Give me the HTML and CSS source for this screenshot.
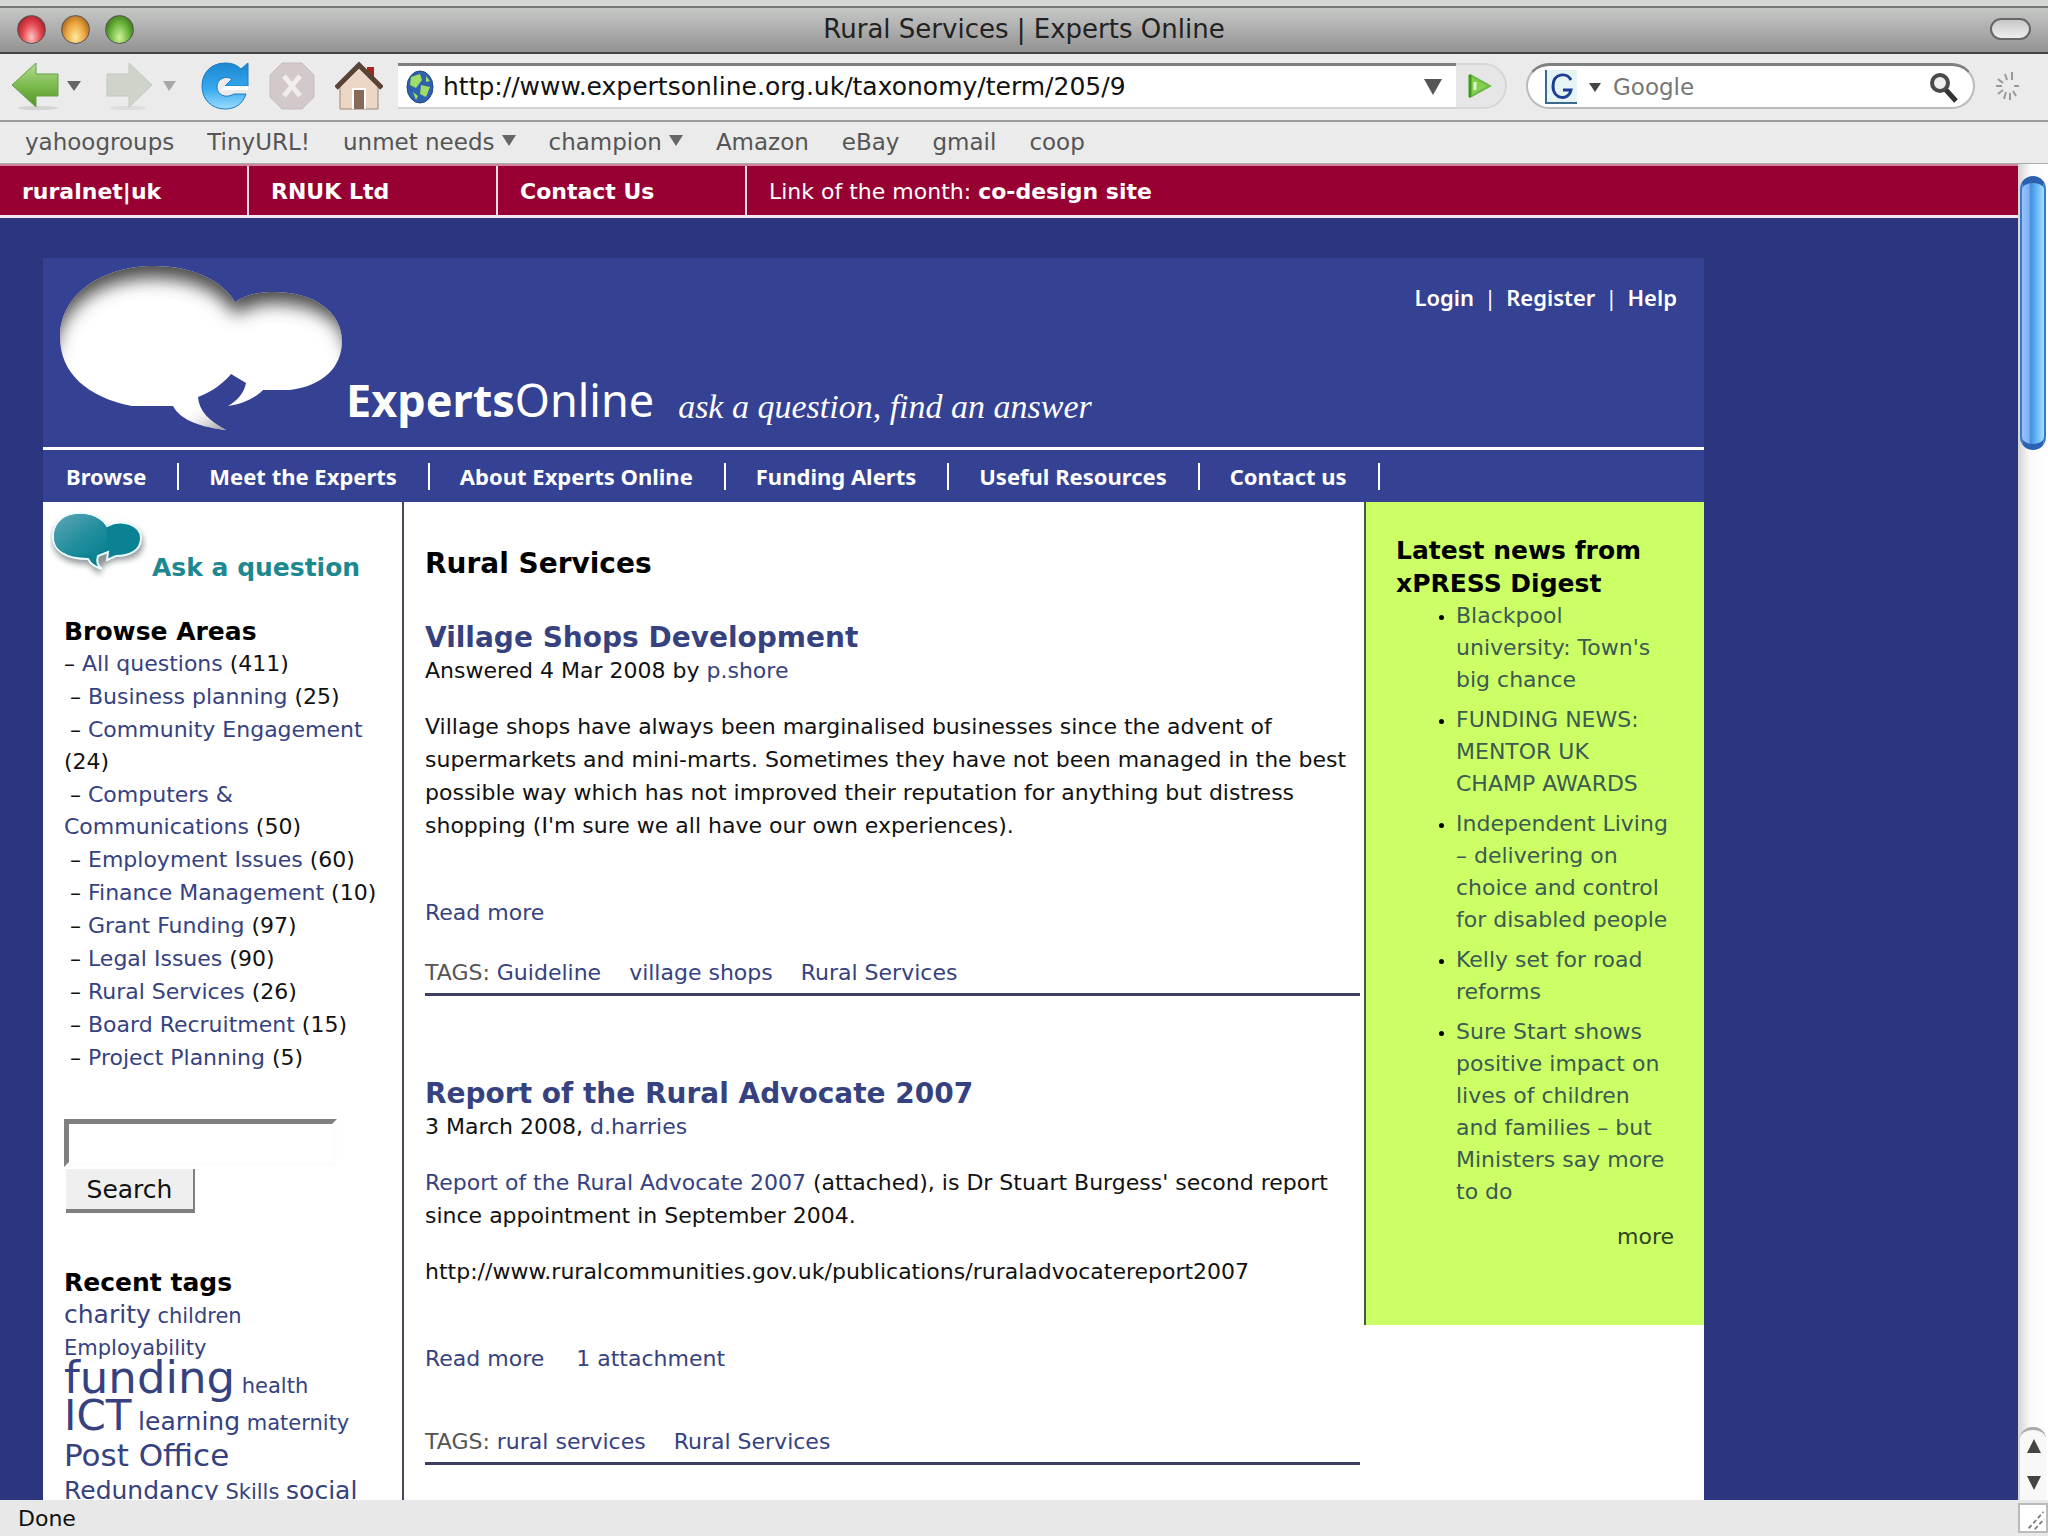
FILE: index.html
```html
<!DOCTYPE html>
<html lang="en">
<head>
<meta charset="UTF-8">
<meta name="viewport" content="width=device-width, initial-scale=1.0">
<title>Rural Services | Experts Online</title>
<link rel="stylesheet" href="styles.css">
</head>
<body>

<div class="titlebar">
    <div class="lights">
        <button class="light red" aria-label="Close"></button>
        <button class="light amber" aria-label="Minimise"></button>
        <button class="light green" aria-label="Zoom"></button>
    </div>
    <span class="window-title">Rural Services | Experts Online</span>
    <button class="pill" aria-label="Toggle toolbar"></button>
</div>

<div class="toolbar">
    <button class="back" aria-label="Back">
        <svg width="72" height="50" viewBox="0 0 72 50">
            <defs>
                <linearGradient id="leaf" x1="0" y1="0" x2="0" y2="1"><stop offset="0" stop-color="#b4dc94"/><stop offset=".5" stop-color="#7dbc4e"/><stop offset="1" stop-color="#4f9226"/></linearGradient>
            </defs>
            <ellipse cx="27" cy="47" rx="20" ry="2" fill="#d2d4d0"/>
            <path d="M1 24 L25 2 V13 H47 V35 H25 V46 Z" fill="url(#leaf)" stroke="#6a9f4a"/>
            <path d="M56 20 H70 L63 30 Z" fill="#666"/>
        </svg>
    </button>
    <button class="forward" aria-label="Forward">
        <svg width="72" height="50" viewBox="0 0 72 50">
            <ellipse cx="22" cy="47" rx="18" ry="2" fill="#dcdddb"/>
            <path d="M46 24 L23 2 V13 H1 V35 H23 V46 Z" fill="#cfd4cb" stroke="#c3c8bf"/>
            <path d="M57 20 H70 L63 30 Z" fill="#a8a8a8"/>
        </svg>
    </button>
    <button class="reload" aria-label="Reload">
        <svg width="48" height="50" viewBox="0 0 48 50">
            <defs>
                <linearGradient id="sky" x1="0" y1="0" x2="0" y2="1"><stop offset="0" stop-color="#1d86cf"/><stop offset=".55" stop-color="#35a8ee"/><stop offset="1" stop-color="#9bdcff"/></linearGradient>
            </defs>
            <path d="M47 2 V25 H24 L31 18 C24 14 16 18 16 26 C16 34 25 38 33 33 H45 C42 43 34 48 24 48 C10 48 1 38 1 25 C1 12 10 2 24 2 C31 2 36 4 40 8 Z" fill="url(#sky)" stroke="#1a7cc4"/>
            <path d="M24 25 H47 V29 H20 Z" fill="#fff"/>
        </svg>
    </button>
    <button class="stop" aria-label="Stop">
        <svg width="46" height="50" viewBox="0 0 46 50">
            <path d="M13 2 H33 L45 14 V36 L33 48 H13 L1 36 V14 Z" fill="#d3c9cb" stroke="#c6bcbe"/>
            <path d="M15 15 L31 35 M31 15 L15 35" stroke="#f1eded" stroke-width="5"/>
        </svg>
    </button>
    <button class="home" aria-label="Home">
        <svg width="48" height="50" viewBox="0 0 48 50">
            <rect x="32" y="6" width="7" height="14" fill="#a3281e"/>
            <path d="M5 25 L24 7 L43 25 V48 H5 Z" fill="#ecd7c7" stroke="#a18472"/>
            <path d="M1 27 L24 4 L47 27" fill="none" stroke="#5a4237" stroke-width="5"/>
            <path d="M18 48 V28 H30 V48" fill="#876958" stroke="#fff" stroke-width="2"/>
        </svg>
    </button>

    <div class="address">
        <svg width="28" height="34" viewBox="0 0 28 34">
            <ellipse cx="14" cy="17" rx="13" ry="16" fill="#2e62ad" stroke="#1f4684"/>
            <path d="M5 7 L14 4 L16 10 L10 18 L4 15 Z M15 15 L24 17 L20 27 L14 24 Z M7 22 L12 26 L10 30 Z M20 6 L24 11 L20 12 Z" fill="#9fdc6a"/>
        </svg>
        <input type="text" aria-label="Address" value="http://www.expertsonline.org.uk/taxonomy/term/205/9">
        <svg width="18" height="18" viewBox="0 0 18 18"><path d="M0 1 H18 L9 17 Z" fill="#555"/></svg>
    </div>
    <button class="go" aria-label="Go">
        <svg width="24" height="24" viewBox="0 0 24 24"><path d="M2 1 L22 12 L2 23 Z" fill="#86cf4e" stroke="#6dba45" stroke-width="2"/><path d="M2 1 V23" stroke="#3c9a1c" stroke-width="3"/><path d="M7 8 V16" stroke="#dff5cd" stroke-width="3"/></svg>
    </button>

    <div class="google">
        <svg width="32" height="34" viewBox="0 0 32 34">
            <rect width="32" height="34" fill="#e6f4f6"/>
            <path d="M1 0 V33 H32" fill="none" stroke="#3b6a8e" stroke-width="2"/>
            <path d="M26 10 C22 2 8 3 8 16 C8 30 24 31 26 20 H18" fill="none" stroke="#1c3f94" stroke-width="3"/>
        </svg>
        <svg width="12" height="10" viewBox="0 0 12 10"><path d="M0 1 H12 L6 10 Z" fill="#444"/></svg>
        <input type="text" aria-label="Web search" placeholder="Google">
        <svg width="30" height="32" viewBox="0 0 30 32">
            <circle cx="11" cy="12" r="8" fill="#eee" stroke="#4a4a4a" stroke-width="4"/>
            <path d="M17 19 L27 30" stroke="#333" stroke-width="5"/>
        </svg>
    </div>
    <svg width="26" height="32" viewBox="0 0 26 32">
        <path d="M17 2 V10 M10 4 L12 10 M3 9 L8 13 M1 16 H7 M3 24 L8 20 M9 29 L11 22 M15 30 V23 M21 26 L18 21 M24 16 H19" stroke="#999" stroke-width="2"/>
    </svg>
</div>

<div class="bookmarks">
    <a href="#">yahoogroups</a>
    <a href="#">TinyURL!</a>
    <a href="#" class="folder">unmet needs</a>
    <a href="#" class="folder">champion</a>
    <a href="#">Amazon</a>
    <a href="#">eBay</a>
    <a href="#">gmail</a>
    <a href="#">coop</a>
</div>

<div class="view">
    <div class="page">
        <div class="topbar">
            <a href="#">ruralnet|uk</a>
            <a href="#">RNUK Ltd</a>
            <a href="#">Contact Us</a>
            <span>Link of the month: <a href="#">co-design site</a></span>
        </div>

        <div class="site">
            <div class="header">
                <svg width="284" height="168" viewBox="0 0 284 168">
                    <defs>
                        <clipPath id="bubbles">
                            <path d="M95 1 C135 1 165 17 176 37 C188 29 201 27 215 27 C255 27 283 47 283 76 C283 102 264 121 231 125 H204 C196 133 184 139 169 141 C179 135 185 128 187 118 L172 109 C164 119 152 127 139 132 C140 146 150 156 167 165 C143 162 122 156 114 141 H73 C28 132 1 108 1 72 C1 30 42 1 95 1 Z"/>
                        </clipPath>
                        <filter id="blur" x="-20%" y="-20%" width="140%" height="140%"><feGaussianBlur stdDeviation="9"/></filter>
                        <linearGradient id="tail" x1="0" y1="0" x2="1" y2="1"><stop offset=".3" stop-color="#fff" stop-opacity="0"/><stop offset="1" stop-color="#777"/></linearGradient>
                    </defs>
                    <g clip-path="url(#bubbles)">
                        <rect width="284" height="168" fill="#fff"/>
                        <path d="M-40 -40 H324 V90 H288 C292 60 260 38 215 38 C201 38 188 42 176 50 C165 28 135 13 95 13 C42 13 -1 40 -5 90 H-40 Z" fill="#4a4a4a" filter="url(#blur)"/>
                        <path d="M112 141 L139 132 L170 168 H112 Z" fill="url(#tail)"/>
                    </g>
                </svg>
                <div class="brand"><b>Experts</b>Online</div>
                <div class="tagline">ask a question, find an answer</div>
                <div class="account"><a href="#">Login</a><span>|</span><a href="#">Register</a><span>|</span><a href="#">Help</a></div>
            </div>

            <div class="nav">
                <a href="#">Browse</a>
                <a href="#">Meet the Experts</a>
                <a href="#">About Experts Online</a>
                <a href="#">Funding Alerts</a>
                <a href="#">Useful Resources</a>
                <a href="#">Contact us</a>
            </div>

            <div class="columns">
                <div class="sidebar">
                    <a href="#" class="ask">
                        <svg width="98" height="68" viewBox="0 0 98 68">
                            <defs>
                                <linearGradient id="teal" x1="0" y1="0" x2="1" y2="1"><stop offset="0" stop-color="#5fa6b4"/><stop offset=".6" stop-color="#1f8d9d"/><stop offset="1" stop-color="#08808f"/></linearGradient>
                                <filter id="soft" x="-20%" y="-20%" width="140%" height="150%"><feGaussianBlur stdDeviation="3"/></filter>
                            </defs>
                            <path d="M30 8 C42 8 53 13 56 20 C70 11 93 17 93 33 C93 48 78 50 65 50 L52 56 L50 65 L38 54 C15 54 3 44 3 31 C3 17 14 8 30 8 Z" fill="#8e9496" filter="url(#soft)"/>
                            <path d="M30 3 C43 3 53 9 57 16 C72 8 91 15 91 28 C91 41 79 46 66 46 L57 50 L58 42 L48 46 C46 52 48 56 52 59 C44 57 40 53 38 49 C15 49 3 40 3 27 C3 13 14 3 30 3 Z" fill="#0b8294" stroke="#e9fbfc" stroke-width="2"/>
                            <path d="M30 4 C46 4 57 13 57 26 C57 36 53 41 47 45 H39 C15 48 4 40 4 27 C4 13 14 4 30 4 Z" fill="url(#teal)"/>
                        </svg>
                        <span>Ask a question</span>
                    </a>

                    <h3>Browse Areas</h3>
                    <ul class="areas">
                        <li class="all">– <a href="#">All questions</a> (411)</li>
                        <li>– <a href="#">Business planning</a> (25)</li>
                        <li>– <a href="#">Community Engagement</a> (24)</li>
                        <li>– <a href="#">Computers &amp; Communications</a> (50)</li>
                        <li>– <a href="#">Employment Issues</a> (60)</li>
                        <li>– <a href="#">Finance Management</a> (10)</li>
                        <li>– <a href="#">Grant Funding</a> (97)</li>
                        <li>– <a href="#">Legal Issues</a> (90)</li>
                        <li>– <a href="#">Rural Services</a> (26)</li>
                        <li>– <a href="#">Board Recruitment</a> (15)</li>
                        <li>– <a href="#">Project Planning</a> (5)</li>
                    </ul>

                    <form class="search">
                        <input type="text" aria-label="Search this site">
                        <button type="submit">Search</button>
                    </form>

                    <h3>Recent tags</h3>
                    <div class="cloud">
                        <a href="#" class="t2">charity</a> <a href="#">children</a><br>
                        <a href="#">Employability</a><br>
                        <a href="#" class="t5">funding</a> <a href="#">health</a><br>
                        <a href="#" class="t4">ICT</a> <a href="#" class="t2">learning</a> <a href="#">maternity</a><br>
                        <a href="#" class="t3">Post Office</a><br>
                        <a href="#" class="t2">Redundancy</a> <a href="#">Skills</a> <a href="#" class="t2">social</a>
                    </div>
                </div>

                <div class="main">
                    <h1>Rural Services</h1>

                    <div class="article">
                        <h2><a href="#">Village Shops Development</a></h2>
                        <div>Answered 4 Mar 2008 by <a href="#">p.shore</a></div>
                        <p>Village shops have always been marginalised businesses since the advent of supermarkets and mini-marts. Sometimes they have not been managed in the best possible way which has not improved their reputation for anything but distress shopping (I'm sure we all have our own experiences).</p>
                        <div class="links"><a href="#">Read more</a></div>
                        <div class="tags">TAGS: <a href="#">Guideline</a> <a href="#">village shops</a> <a href="#">Rural Services</a></div>
                    </div>

                    <div class="article">
                        <h2><a href="#">Report of the Rural Advocate 2007</a></h2>
                        <div>3 March 2008, <a href="#">d.harries</a></div>
                        <p><a href="#">Report of the Rural Advocate 2007</a> (attached), is Dr Stuart Burgess' second report since appointment in September 2004.</p>
                        <p>http://www.ruralcommunities.gov.uk/publications/ruraladvocatereport2007</p>
                        <div class="links"><a href="#">Read more</a> <a href="#">1 attachment</a></div>
                        <div class="tags late">TAGS: <a href="#">rural services</a> <a href="#">Rural Services</a></div>
                    </div>
                </div>

                <div class="news">
                    <h3>Latest news from xPRESS Digest</h3>
                    <ul>
                        <li><a href="#">Blackpool university: Town's big chance</a></li>
                        <li><a href="#">FUNDING NEWS: MENTOR UK CHAMP AWARDS</a></li>
                        <li><a href="#">Independent Living – delivering on choice and control for disabled people</a></li>
                        <li><a href="#">Kelly set for road reforms</a></li>
                        <li><a href="#">Sure Start shows positive impact on lives of children and families – but Ministers say more to do</a></li>
                    </ul>
                    <a href="#" class="more">more</a>
                </div>
            </div>
        </div>
    </div>

    <div class="scrollbar">
        <div class="thumb"></div>
        <div class="arrows">
            <svg width="28" height="70" viewBox="0 0 28 70">
                <path d="M7 23 L14 9 L21 23 Z M7 46 H21 L14 60 Z" fill="#444"/>
            </svg>
        </div>
    </div>
</div>

<div class="status">
    <span>Done</span>
    <svg width="28" height="30" viewBox="0 0 28 30">
        <path d="M9 27 L26 8 M16 28 L27 16" stroke="#777" stroke-width="2" stroke-dasharray="5 3"/>
    </svg>
</div>

</body>
</html>
```
FILE: styles.css
```css
* {
    box-sizing: border-box;
}
body {
    margin: 0;
    height: 100vh;
    display: flex;
    flex-direction: column;
    overflow: hidden;
    font-family: "DejaVu Sans", "Noto Sans", sans-serif;
    font-size: 22px;
    line-height: 33px;
    color: #111;
    background: #ebebeb;
}
a {
    color: #36427f;
    text-decoration: none;
}
button {
    padding: 0;
    border: none;
    background: none;
    font-family: inherit;
}
svg {
    display: block;
    flex: none;
}
h1, h2, h3, p, ul {
    margin: 0;
    padding: 0;
}

/* Browser window */
.titlebar {
    display: grid;
    grid-template-columns: 1fr auto 1fr;
    align-items: center;
    height: 54px;
    padding: 0 17px;
    border-top: 6px solid #d4d7d3;
    border-bottom: 2px solid #444;
    background: linear-gradient(#777 0, #777 2px, #c6c8c6 2px, #929292);
}
.lights {
    display: flex;
    gap: 15px;
}
.light {
    width: 29px;
    height: 29px;
    border-radius: 50%;
    border: 1px solid #555;
}
.red {
    background: radial-gradient(ellipse at 50% 80%, #ffc4c0, #e2424a 50%, #7d1018);
}
.amber {
    background: radial-gradient(ellipse at 50% 80%, #ffeb9c, #eba23c 50%, #7c4410);
}
.green {
    background: radial-gradient(ellipse at 50% 80%, #d2f29c, #68b43a 50%, #24500f);
}
.window-title {
    font-size: 26px;
    color: #222;
}
.pill {
    justify-self: end;
    width: 41px;
    height: 22px;
    border: 2px solid #666;
    border-radius: 11px;
    background: linear-gradient(#c8c8c8, #eee);
}
.toolbar {
    display: flex;
    align-items: center;
    height: 68px;
    padding: 0 27px 2px 11px;
    border-bottom: 2px solid #9b9b9b;
}
.back, .forward {
    margin-right: 23px;
}
.reload, .stop {
    margin-right: 20px;
}
.home {
    margin-right: 15px;
}
.address {
    flex: 1;
    display: flex;
    align-items: center;
    gap: 9px;
    height: 46px;
    padding: 0 14px 0 8px;
    border-top: 3px solid #808080;
    border-bottom: 2px solid #d2d2d2;
    background: #fff;
}
.address input, .google input {
    flex: 1;
    min-width: 0;
    padding: 0;
    border: none;
    outline: none;
    background: none;
    font-family: inherit;
    font-size: 25px;
    color: #111;
}
.go {
    display: flex;
    align-items: center;
    width: 51px;
    height: 46px;
    margin-right: 19px;
    padding-left: 12px;
    border: 2px solid #d6d6d6;
    border-left: none;
    border-radius: 0 23px 23px 0;
    background: #e6e6e6;
}
.google {
    display: flex;
    align-items: center;
    gap: 12px;
    width: 449px;
    height: 46px;
    margin-right: 20px;
    padding: 0 14px 0 17px;
    border: 2px solid #bbb;
    border-top: 3px solid #808080;
    border-radius: 23px;
    background: #fff;
}
.google input {
    font-size: 23px;
}
.google input::placeholder {
    color: #777;
    opacity: 1;
}
.bookmarks {
    display: flex;
    align-items: center;
    gap: 33px;
    height: 42px;
    padding-left: 25px;
    border-bottom: 1px solid #aaa;
    font-size: 23px;
}
.bookmarks a {
    color: #555;
}
.folder::after {
    content: "";
    display: inline-block;
    margin: 0 0 4px 7px;
    border: 7px solid transparent;
    border-top: 11px solid #666;
    border-bottom: none;
}
.view {
    flex: 1;
    min-height: 0;
    display: flex;
    overflow: hidden;
}
.scrollbar {
    display: flex;
    flex-direction: column;
    justify-content: space-between;
    width: 30px;
    padding: 12px 2px 0;
    background: linear-gradient(90deg, #d4d4d4, #fafafa 40%, #fff);
}
.thumb {
    height: 274px;
    border: 2px solid #3a7cc4;
    border-top: 7px solid #2c5fae;
    border-bottom: 6px solid #2c62b4;
    border-radius: 13px;
    background: linear-gradient(90deg, #9cc2ff, #7eb2f4 30%, #4590de 40%, #63b4f6 65%, #a4e0fc);
}
.arrows {
    border-top: 3px solid #aaa;
    border-radius: 12px 12px 0 0;
    background: #f8f8f8;
}
.status {
    display: flex;
    justify-content: space-between;
    align-items: center;
    height: 36px;
    padding-left: 18px;
    background: #e8e8e8;
}
.status svg {
    width: 30px;
    border: 2px solid #bbb;
    background: #fff;
}

/* Web page */
.page {
    flex: 1;
    background: #2c367f;
}
.topbar {
    display: flex;
    height: 54px;
    border-top: 2px solid #d2849c;
    border-bottom: 3px solid #f4e6f4;
    background: #980033;
    line-height: 52px;
    color: #fff;
}
.topbar > a {
    width: 249px;
    padding-left: 22px;
    border-right: 2px solid #f4dce6;
}
.topbar > span {
    padding-left: 22px;
}
.topbar a {
    font-weight: 700;
    color: #fff;
}
.site {
    margin: 40px 314px 0 43px;
    background: #fff;
}
.header {
    display: flex;
    height: 192px;
    padding: 7px 27px 0 16px;
    border-bottom: 3px solid #fff;
    background: #354192;
    color: #fff;
}
.brand {
    margin: 105px 24px 0 3px;
    font-family: "Noto Sans", sans-serif;
    font-size: 45px;
    line-height: 60px;
}
.tagline {
    flex: 1;
    margin-top: 122px;
    font-family: "Liberation Serif", serif;
    font-size: 34px;
    font-style: italic;
    line-height: 40px;
}
.account {
    display: flex;
    gap: 10px;
    margin-top: 16px;
}
.account, .nav {
    font-family: "Noto Sans", sans-serif;
}
.account a, .nav a {
    font-weight: 600;
    color: #fff;
}
.nav {
    display: flex;
    align-items: center;
    height: 52px;
    padding-left: 23px;
    background: #354192;
}
.nav a {
    margin-right: 30px;
    padding-right: 31px;
    border-right: 2px solid #fff;
    font-weight: 700;
    line-height: 27px;
}
.columns {
    display: grid;
    grid-template-columns: 361px 1fr 340px;
    align-items: start;
}
.sidebar {
    min-height: 1100px;
    padding: 8px 12px 0 21px;
    border-right: 2px solid #454860;
}
.ask {
    display: flex;
    align-items: flex-end;
    gap: 4px;
    height: 74px;
    margin: 0 -12px 31px -14px;
    font-size: 25px;
    font-weight: 700;
    color: #1c8890;
}
.ask svg {
    align-self: flex-start;
}
h3 {
    font-size: 25px;
    line-height: 33px;
    color: #000;
}
.areas {
    list-style: none;
    line-height: 32px;
}
.areas li {
    margin-bottom: 1px;
    text-indent: 6px;
}
.areas .all {
    text-indent: 0;
}
.search {
    display: flex;
    flex-direction: column;
    align-items: flex-start;
    gap: 2px;
    margin: 45px 0 53px;
}
.search input {
    width: 273px;
    height: 48px;
    border: 5px solid;
    border-color: #808080 #fdfdfd #fdfdfd #808080;
    background: #fff;
    font-size: 22px;
}
.search button {
    width: 129px;
    height: 44px;
    margin-left: 2px;
    border-right: 2px solid #808080;
    border-bottom: 4px solid #808080;
    background: #efefef;
    font-size: 25px;
    color: #111;
}
.cloud {
    font-size: 21px;
    line-height: 32px;
    white-space: nowrap;
}
.t2 {
    font-size: 25px;
}
.t3 {
    font-size: 31px;
    line-height: 33px;
}
.t4, .t5 {
    font-size: 42px;
    line-height: 28px;
}
.t5 {
    font-size: 45px;
}
.main {
    padding: 39px 4px 0 21px;
}
h1 {
    font-size: 28px;
    line-height: 46px;
    color: #000;
}
h2 {
    font-size: 28px;
    line-height: 33px;
}
.main h1 {
    margin-bottom: 34px;
}
.article {
    margin-bottom: 81px;
}
.article p {
    margin-top: 23px;
}
.links {
    display: flex;
    gap: 32px;
    margin-top: 54px;
}
.tags {
    margin-top: 27px;
    padding-bottom: 4px;
    border-bottom: 3px solid #3c3f62;
    color: #555;
}
.late {
    margin-top: 50px;
}
.tags a {
    margin-right: 21px;
}
.news {
    height: 823px;
    padding: 32px 30px 0 30px;
    border-left: 2px solid #3f5a3c;
    background: #ccff66;
}
.news ul {
    padding-left: 60px;
    line-height: 32px;
}
.news li {
    margin-bottom: 8px;
}
.news li::marker {
    font-size: 16px;
    color: #000;
}
.news a {
    color: #3a5a52;
}
.news .more {
    display: block;
    margin-top: 12px;
    text-align: right;
    color: #2c4420;
}
```
